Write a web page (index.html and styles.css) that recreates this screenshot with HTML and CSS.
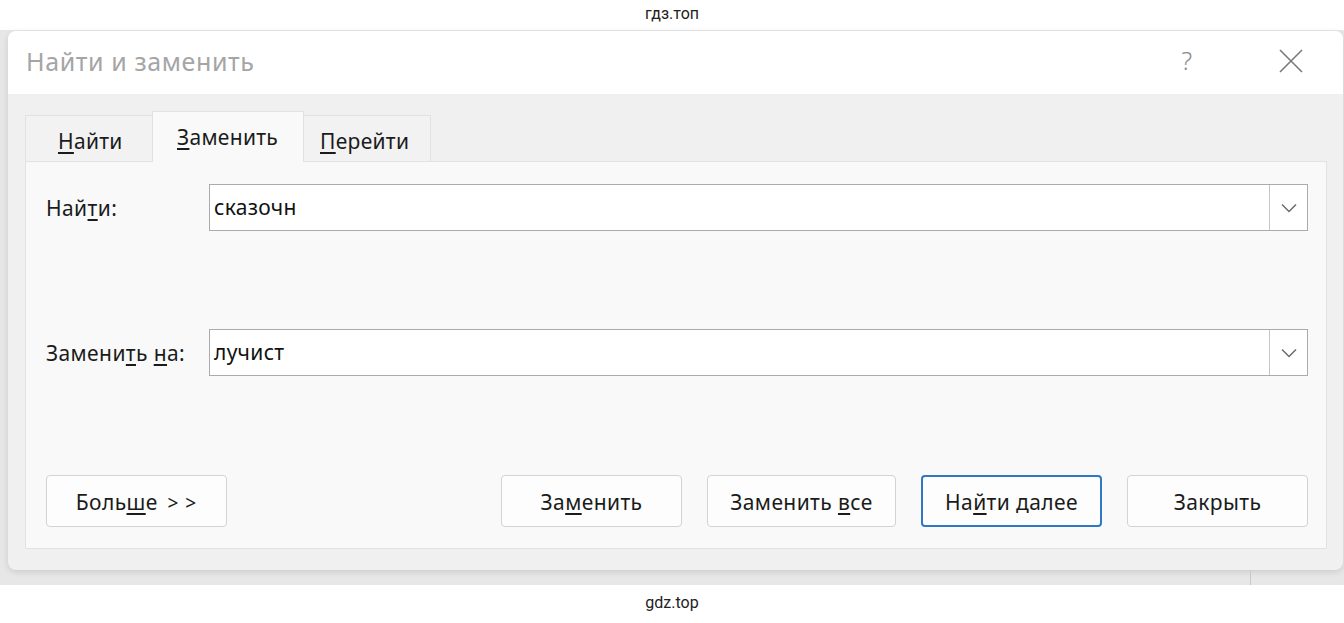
FILE: index.html
```html
<!DOCTYPE html>
<html lang="ru">
<head>
<meta charset="UTF-8">
<meta name="viewport" content="width=device-width, initial-scale=1.0">
<title>Найти и заменить</title>
<link rel="stylesheet" href="styles.css">
</head>
<body>
<div class="caption">гдз.топ</div>

<div class="screen">
  <div class="window">
    <div class="titlebar">
      <span class="title">Найти и заменить</span>
      <span class="help">?</span>
      <svg class="close" width="24" height="24" viewBox="0 0 24 24">
        <path d="M1 1 L23 23 M23 1 L1 23" stroke="#7a7a7a" stroke-width="1.6" fill="none"/>
      </svg>
    </div>

    <div class="dialog-body">
      <div class="tabs">
        <div class="tab"><u>Н</u>айти</div>
        <div class="tab active"><u>З</u>аменить</div>
        <div class="tab"><u>П</u>ерейти</div>
      </div>

      <div class="panel">
        <div class="field-row">
          <label class="field-label">Най<u>т</u>и:</label>
          <div class="combo">
            <span class="combo-text">сказочн</span>
            <span class="combo-btn">
              <svg width="16" height="10" viewBox="0 0 16 10"><path d="M1 1.5 L8 8.5 L15 1.5" stroke="#6b6b6b" stroke-width="1.5" fill="none"/></svg>
            </span>
          </div>
        </div>

        <div class="field-row second">
          <label class="field-label">Замени<u>т</u>ь <u>н</u>а:</label>
          <div class="combo">
            <span class="combo-text">лучист</span>
            <span class="combo-btn">
              <svg width="16" height="10" viewBox="0 0 16 10"><path d="M1 1.5 L8 8.5 L15 1.5" stroke="#6b6b6b" stroke-width="1.5" fill="none"/></svg>
            </span>
          </div>
        </div>

        <div class="button-row">
          <button class="btn">Боль<u>ш</u>е <span class="arrows">&gt; &gt;</span></button>
          <div class="spacer"></div>
          <button class="btn">За<u>м</u>енить</button>
          <button class="btn wide">Заменить <u>в</u>се</button>
          <button class="btn default">На<u>й</u>ти далее</button>
          <button class="btn">Закрыть</button>
        </div>
      </div>
    </div>
  </div>
  <div class="under">
    <div class="under-left"></div>
  </div>
</div>

<div class="caption bottom">gdz.top</div>
</body>
</html>
```

FILE: styles.css
```css
/* page */
body {
    margin: 0;
    background: #fff;
    font-family: "Noto Sans", "Open Sans", sans-serif;
    color: #1b1b1b;
}

.caption {
    height: 30px;
    line-height: 28px;
    text-align: center;
    font-family: Roboto, "Liberation Sans", sans-serif;
    font-size: 16px;
    color: #222;
}

.caption.bottom {
    height: 38px;
    line-height: 36px;
}

/* grey screenshot area behind the window */
.screen {
    height: 555px;
    background: #e7e7e7;
    display: flex;
    flex-direction: column;
}

.window {
    margin: 1px 0 0 8px;
    width: 1335px;
    height: 539px;
    background: #f0f0f0;
    border-radius: 8px;
    box-shadow: 0 2px 6px rgba(0,0,0,0.12);
    display: flex;
    flex-direction: column;
    overflow: hidden;
}

.titlebar {
    height: 63px;
    background: #fff;
    display: flex;
    align-items: center;
    padding-left: 18px;
}

.title {
    font-size: 25px;
    letter-spacing: 0.6px;
    color: #a5a5a5;
    flex: 1;
    padding-bottom: 4px;
}

.help {
    font-size: 25px;
    color: #8c8c8c;
    font-weight: 300;
    margin-right: 87px;
    padding-bottom: 6px;
}

.close {
    margin-right: 40px;
    margin-bottom: 4px;
}

.dialog-body {
    flex: 1;
    padding: 17px 16px 21px 17px;
    display: flex;
    flex-direction: column;
}

/* tabs */
.tabs {
    display: flex;
    align-items: flex-end;
    height: 50px;
}

.tab {
    height: 46px;
    box-sizing: border-box;
    border: 1px solid #e2e2e2;
    border-bottom: none;
    background: #f2f2f2;
    font-size: 21px;
    letter-spacing: 0.3px;
    padding: 11px 0 0 32px;
    width: 128px;
}

.tab + .tab {
    margin-left: -1px;
}

.tab.active {
    height: 51px;
    background: #f9f9f9;
    width: 152px;
    padding: 11px 0 0 24px;
    position: relative;
    z-index: 1;
    margin-bottom: -1px;
}

.tab:last-child {
    padding-left: 16px;
}

u {
    text-underline-offset: 3px;
    text-decoration-thickness: 1.5px;
}

/* tab panel */
.panel {
    flex: 1;
    background: #f9f9f9;
    border: 1px solid #e2e2e2;
    padding: 22px 18px 21px 20px;
    display: flex;
    flex-direction: column;
}

.field-row {
    display: flex;
    align-items: center;
    height: 47px;
}

.field-row.second {
    margin-top: 98px;
}

.field-label {
    width: 163px;
    font-size: 21px;
    letter-spacing: 0.4px;
}

.combo {
    flex: 1;
    height: 47px;
    box-sizing: border-box;
    border: 1px solid #ababab;
    background: #fff;
    display: flex;
    align-items: center;
}

.combo-text {
    flex: 1;
    font-size: 21px;
    letter-spacing: 0.3px;
    color: #111;
    padding: 0 0 2px 4px;
}

.combo-btn {
    width: 37px;
    height: 100%;
    border-left: 1px solid #c6c6c6;
    display: flex;
    align-items: center;
    justify-content: center;
}

/* buttons */
.button-row {
    margin-top: auto;
    display: flex;
    gap: 25px;
}

.spacer {
    flex: 1;
}

.btn {
    width: 181px;
    height: 52px;
    box-sizing: border-box;
    background: #fdfdfd;
    border: 1px solid #d3d3d3;
    border-radius: 4px;
    font-family: "Noto Sans", "Open Sans", sans-serif;
    font-size: 21px;
    letter-spacing: 0.4px;
    color: #1b1b1b;
    padding: 2px 0 0;
}

.arrows {
    letter-spacing: 1px;
    margin-left: 4px;
    font-size: 19px;
}

.btn.wide {
    width: 189px;
}

.btn.default {
    border: 2px solid #2f78c4;
}

/* strip below the window */
.under {
    flex: 1;
}

.under-left {
    width: 1250px;
    height: 100%;
    border-right: 1px solid #c9c9c9;
}
```
